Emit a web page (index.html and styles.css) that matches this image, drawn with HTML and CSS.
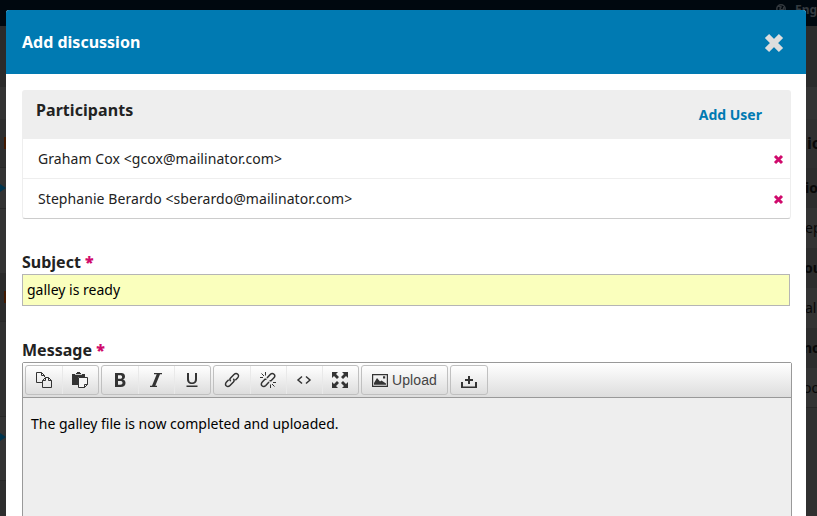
FILE: index.html
```html
<!DOCTYPE html>
<html lang="en">
<head>
<meta charset="utf-8">
<title>Add discussion</title>
<link rel="stylesheet" href="styles.css">
</head>
<body>
<div class="backdrop">
  <div class="topbar">
    <svg class="globe" viewBox="0 0 12 12"><circle cx="6" cy="6" r="4.2"/><path d="M3 3l3 1-1 2 3 1 1-3"/></svg>
    <span>Eng</span>
  </div>
  <div class="band head"></div>
  <div class="band tabs"></div>
  <div class="columns">
    <div class="left">
      <div class="cell l1"><i class="mark"></i></div>
      <div class="cell l2"><i class="arrow"></i></div>
      <div class="cell l3"></div>
      <div class="cell l4"><i class="mark"></i></div>
      <div class="cell l5"></div>
      <div class="cell l6"><i class="arrow"></i></div>
      <div class="cell l7"></div>
    </div>
    <div class="right">
      <div class="item title">io</div>
      <div class="item strong">io</div>
      <div class="item light">ep</div>
      <div class="item strong ou">ou</div>
      <div class="item light">al</div>
      <div class="item strong no">no</div>
      <div class="item light last">oo</div>
    </div>
  </div>
</div>

<div class="modal">
  <header class="modal-head">
    <h1>Add discussion</h1>
    <svg class="close" viewBox="0 0 22 22"><path d="M4 4L18 18M18 4L4 18"/></svg>
  </header>
  <div class="content">
    <section class="participants">
      <div class="list-head"><h2>Participants</h2><a>Add User</a></div>
      <div class="person"><span>Graham Cox &lt;gcox@mailinator.com&gt;</span><svg class="remove" viewBox="0 0 22 22"><path d="M4 4L18 18M18 4L4 18"/></svg></div>
      <div class="person"><span>Stephanie Berardo &lt;sberardo@mailinator.com&gt;</span><svg class="remove" viewBox="0 0 22 22"><path d="M4 4L18 18M18 4L4 18"/></svg></div>
    </section>
    <div class="label subject">Subject <b>*</b></div>
    <div class="field">galley is ready</div>
    <div class="label message">Message <b>*</b></div>
    <div class="editor">
      <div class="toolbar">
        <div class="group">
          <span class="btn"><svg viewBox="0 0 16 16"><path class="line" d="M6.500 10.500H.5V.500H5.500L8.500 3.500V5M5.500 .500V3.500H8.500M9.500 5.500H12.500L15.500 8.500V15.500H6.500V8.500ZM9.500 5.500V8.500H6.500M12.500 5.500V8.500H15.500"/></svg></span>
          <span class="btn"><svg class="paste" viewBox="0 0 16 16"><path d="M0 2H4V1H5V0H8V1H9V2H13V5H6V13H0Z"/><path class="pale" d="M3 3H10V2.200H3Z"/><path class="paper" d="M6.500 5.500H15.500V12.500L12.500 15.500H6.500Z"/><path class="line" d="M15.500 12.500H12.500V15.500"/></svg></span>
        </div>
        <div class="group">
          <span class="btn"><svg viewBox="0 0 16 16"><path fill-rule="evenodd" d="M3 1H8.500C12 1 13 2.600 13 4.500C13 6 12.300 7 11 7.600C12.700 8.100 13.500 9.300 13.500 11C13.500 13.600 11.700 15 8.700 15H3ZM6 3.200V6.700H8C9.500 6.700 10.100 6 10.100 4.900C10.100 3.700 9.400 3.200 8 3.200ZM6 8.900V12.800H8.300C9.900 12.800 10.500 12 10.500 10.800C10.500 9.500 9.700 8.900 8.200 8.900Z"/></svg></span>
          <span class="btn"><svg viewBox="0 0 16 16"><path d="M6 1H14V2.200H12L7.300 13.800H9V15H2V13.800H4L8.700 2.200H6Z"/></svg></span>
          <span class="btn"><svg viewBox="0 0 16 16"><path d="M2.500 13.500H13.500V15H2.500ZM3 1H5V7C5 9.500 6 10.500 8 10.500S11 9.500 11 7V1H13V7C13 10.500 11.200 12 8 12S3 10.500 3 7Z"/></svg></span>
        </div>
        <div class="group">
          <span class="btn"><svg viewBox="0 0 16 16"><path class="chain" d="M6.700 9.300C5.600 8.200 5.700 7 6.600 6L10 2.500C11.200 1.300 12.800 1.300 13.800 2.200C14.800 3.200 14.700 4.800 13.500 6L11.300 8.200M9.300 6.700C10.400 7.800 10.300 9 9.400 10L6 13.500C4.800 14.700 3.200 14.700 2.200 13.800C1.200 12.800 1.300 11.200 2.500 10L4.700 7.800"/></svg></span>
          <span class="btn"><svg viewBox="0 0 16 16"><path class="chain" d="M7 6L10.200 2.500C11.400 1.300 13 1.300 14 2.200C15 3.200 14.900 4.800 13.700 6L11 8.700L9.500 8.700M9 10L5.800 13.500C4.600 14.700 3 14.700 2 13.800C1 12.800 1.100 11.200 2.300 10L5 7.300L6.500 7.300"/><path class="line" d="M5.500 0V3.500M1.500 1.500L4 4M0 5.500H3M10.500 12.500V16M12 12L14.500 14.500M13 10.500H16"/></svg></span>
          <span class="btn"><svg viewBox="0 0 16 16"><path class="code" d="M6 4.500L2 8L6 11.500M10 4.500L14 8L10 11.500"/></svg></span>
          <span class="btn"><svg viewBox="0 0 16 16"><path d="M0 0H6L4 2L7 5L5 7L2 4L0 6ZM16 0V6L14 4L11 7L9 5L12 2L10 0ZM0 16V10L2 12L5 9L7 11L4 14L6 16ZM16 16H10L12 14L9 11L11 9L14 12L16 10Z"/></svg></span>
        </div>
        <div class="group upload">
          <svg viewBox="0 0 16 16"><path fill-rule="evenodd" d="M0 2H16V15H0ZM1.200 3.200V13.800H14.800V3.200Z"/><path d="M2 12.800V11L5 6L8 9.500L9.500 8.500L14 11.500V12.800ZM11 4.300H13.200V6.500H11Z"/></svg><span>Upload</span>
        </div>
        <div class="group single"><svg viewBox="0 0 16 16"><path d="M0 9H2V13.500H14V9H16V15H0ZM7 3H9V6H12V8H9V11H7V8H4V6H7Z"/></svg></div>
      </div>
      <div class="text">The galley file is now completed and uploaded.</div>
    </div>
  </div>
</div>
</body>
</html>
```
FILE: styles.css
```css
* { box-sizing: border-box; }
html, body { margin: 0; height: 100%; overflow: hidden; }
body { font-family: "Noto Sans", sans-serif; font-size: 14px; color: #222; background: #333; }
h1, h2 { margin: 0; font-weight: 700; }
svg { display: block; }

.backdrop { position: absolute; inset: 0; overflow: hidden; display: flex; flex-direction: column; background: #303030; color: #080808; }
.topbar { height: 26px; flex: none; background: #00080f; display: flex; padding-left: 775px; gap: 8px; font-size: 12px; line-height: 19px; font-weight: 700; color: #343a3f; }
.globe { width: 12px; height: 12px; margin-top: 3px; flex: none; fill: none; stroke: #343a3f; stroke-width: 1.5; }
.band { flex: none; }
.head { height: 61px; background: #2b2b2b; }
.tabs { height: 32px; background: #333; }
.columns { flex: 1; display: flex; justify-content: space-between; }
.left { width: 6px; }
.right { width: 13px; overflow: hidden; }
.cell { display: flex; align-items: center; overflow: hidden; border-bottom: 1px solid #282828; }
.l1 { height: 49px; background: #2e2e2e; }
.l2 { height: 41px; background: #333; }
.l3 { height: 64px; border: 0; background: #333; }
.l4 { height: 49px; background: #2b2b2b; }
.l5 { height: 95px; background: #303030; }
.l6 { height: 64px; background: #333; padding-bottom: 24px; }
.l7 { height: 40px; border: 0; background: #2e2e2e; }
.mark { width: 2px; height: 12px; margin-left: 4px; background: #421900; }
.arrow { border: solid transparent; border-width: 4px 0 4px 6px; border-left-color: #00344d; }
.item { height: 40px; line-height: 40px; text-indent: 1px; }
.title { height: 49px; line-height: 49px; font-size: 16px; font-weight: 700; text-indent: 3px; }
.strong { font-weight: 700; background: #2d2d2d; }
.light { background: #333; }
.ou { text-indent: 0; }
.no { text-indent: -1px; }
.last { border-bottom: 1px solid #272727; text-indent: -1px; }

.modal { position: absolute; top: 10px; left: 6px; width: 800px; height: 506px; overflow: hidden; background: #fff; border-radius: 3px 3px 0 0; }
.modal-head { height: 64px; padding: 0 21px 0 16px; background: #007ab2; display: flex; align-items: center; justify-content: space-between; }
.modal-head h1 { font-size: 16px; line-height: 24px; color: #fff; }
.close { width: 22px; height: 22px; margin-top: 1px; fill: none; stroke: #ddd; stroke-width: 6; }
.content { padding: 16px 14px 0 16px; }
.participants { width: 769px; height: 129px; border: 1px solid #eee; border-bottom-color: #ccc; border-radius: 3px; }
.list-head { height: 48px; background: #eee; padding: 0 28px 0 13px; display: flex; justify-content: space-between; }
.list-head h2 { font-size: 16px; line-height: 38px; letter-spacing: .06px; }
.list-head a { color: #007ab2; font-size: 14px; line-height: 48px; font-weight: 700; }
.person { height: 39px; padding: 0 6.5px 0 15px; display: flex; align-items: center; justify-content: space-between; }
.person span { letter-spacing: .07px; }
.person + .person { border-top: 1px solid #eee; height: 40px; }
.remove { width: 11px; height: 11px; margin-top: 2px; fill: none; stroke: #d00a6c; stroke-width: 6; }
.label { font-size: 16px; line-height: 24px; font-weight: 700; }
.label b { color: #d00a6c; }
.subject { margin-top: 31px; }
.message { margin-top: 32px; }
.field { width: 768px; height: 32px; border: 1px solid #b5b5b5; background: #faffbd; color: #000; line-height: 30px; padding-left: 4px; }
.editor { width: 770px; height: 200px; border: 1px solid #999; border-radius: 2px 2px 0 0; background: #eee; }
.toolbar { height: 35px; display: flex; gap: 2px; padding: 2px 0 2px 2px; border-bottom: 1px solid #999; background: linear-gradient(#fff, #ddd); }
.group { height: 30px; display: flex; align-items: center; border: 1px solid #c0c0c0; border-radius: 3px; background: linear-gradient(#fff, #ddd); }
.group svg { width: 16px; height: 16px; fill: #333; }
.btn { width: 36px; height: 28px; display: flex; align-items: center; justify-content: center; }
.btn + .btn { box-shadow: inset 1px 0 #e9e9e9; }
.group .line { fill: none; stroke: #333; stroke-width: 1; }
.chain, .code { fill: none; stroke: #333; stroke-width: 1.5; }
.paper { fill: #f5f5f5; stroke: #333; }
.pale { fill: #eee; }
.upload { width: 87px; padding-left: 10px; gap: 4px; font: 14px "Liberation Sans", sans-serif; letter-spacing: .1px; color: #444; }
.single { width: 38px; justify-content: center; }
.single svg { margin-top: 2px; }
.text { padding: 16px 8px; line-height: 20px; color: #000; }
```
